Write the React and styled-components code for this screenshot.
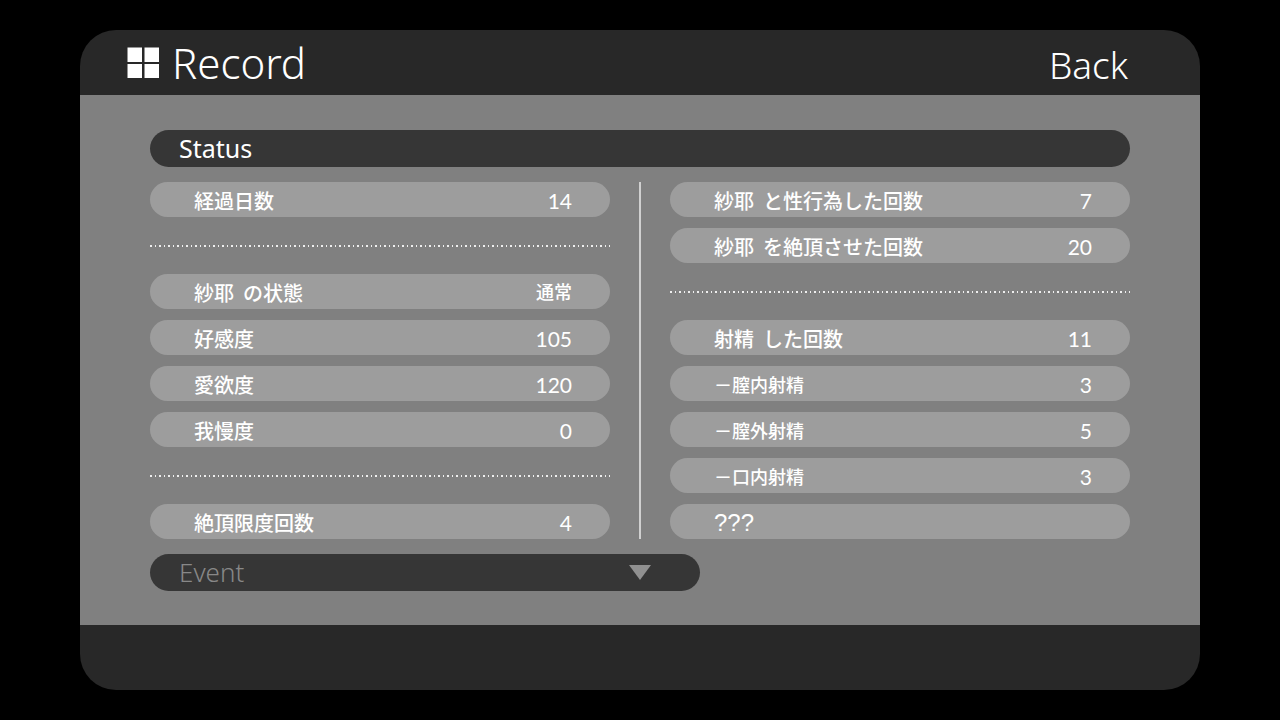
import React from 'react'
import styled, {createGlobalStyle} from 'styled-components'

const leftStats = [
    {label: '経過日数', value: '14'},
    null,
    {label: '紗耶  の状態', value: '通常', text: true},
    {label: '好感度', value: '105'},
    {label: '愛欲度', value: '120'},
    {label: '我慢度', value: '0'},
    null,
    {label: '絶頂限度回数', value: '4'},
]

const rightStats = [
    {label: '紗耶  と性行為した回数', value: '7'},
    {label: '紗耶  を絶頂させた回数', value: '20'},
    null,
    {label: '射精  した回数', value: '11'},
    {label: '－膣内射精', value: '3', sub: true},
    {label: '－膣外射精', value: '5', sub: true},
    {label: '－口内射精', value: '3', sub: true},
    {label: '???', value: '', locked: true},
]

function StatColumn({stats}) {
    return (
        <StatList>
            {stats.map((stat, i) => stat ? (
                <StatRow key={i}>
                    <StatLabel $sub={stat.sub} $locked={stat.locked}>{stat.label}</StatLabel>
                    <StatValue $text={stat.text}>{stat.value}</StatValue>
                </StatRow>
            ) : (
                <DottedRow key={i} role="presentation" />
            ))}
        </StatList>
    )
}

export default function App() {
    return (
        <>
            <GlobalStyle />
            <Panel>
                <Header>
                    <Title>
                        <MenuIcon viewBox="0 0 32 32" aria-hidden="true">
                            <path d="M0.5 0.5h14.5v14.5H0.5zM17.5 0.5h14.5v14.5H17.5zM0.5 17h14.5v14H0.5zM17.5 17h14.5v14H17.5z" />
                        </MenuIcon>
                        Record
                    </Title>
                    <BackButton type="button">Back</BackButton>
                </Header>
                <Body>
                    <SectionBar>Status</SectionBar>
                    <Columns>
                        <StatColumn stats={leftStats} />
                        <Divider />
                        <StatColumn stats={rightStats} />
                    </Columns>
                    <EventButton type="button" aria-expanded="false">
                        Event
                        <Arrow viewBox="0 0 22 15" aria-hidden="true">
                            <path d="M0 0h22L11 15z" />
                        </Arrow>
                    </EventButton>
                </Body>
                <Footer />
            </Panel>
        </>
    )
}

const GlobalStyle = createGlobalStyle`
* {
    box-sizing: border-box;
}

body {
    margin: 0;
    background: #000;
    color: #fff;
    font-family: Lato, "Noto Sans CJK JP", sans-serif;
}
`;

const Panel = styled.main`
margin: 30px 80px;
border-radius: 36px;
overflow: hidden;
background: #282828;
`;

const Header = styled.header`
display: flex;
align-items: center;
justify-content: space-between;
height: 65px;
padding: 0 72px 0 47px;
`;

const Title = styled.h1`
display: flex;
align-items: center;
gap: 13px;
margin: 0;
font: 300 42px/64px "Noto Sans", sans-serif;
`;

const MenuIcon = styled.svg`
width: 32px;
height: 32px;
fill: #fff;
`;

const BackButton = styled.button`
padding: 4px 0 0;
border: 0;
background: none;
color: #fff;
font: 300 37px/58px "Noto Sans", sans-serif;
cursor: pointer;
`;

const Body = styled.section`
display: flex;
flex-direction: column;
gap: 15px;
padding: 35px 70px 34px;
background: #808080;
`;

const SectionBar = styled.h2`
margin: 0;
padding: 0 29px;
border-radius: 19px;
background: #363636;
font: 400 25px/37px "Noto Sans", sans-serif;
`;

const Columns = styled.div`
display: grid;
grid-template-columns: 1fr 2px 1fr;
column-gap: 29px;
`;

const Divider = styled.div`
background: #d0d0d0;
`;

const StatList = styled.dl`
display: flex;
flex-direction: column;
gap: 11px;
margin: 0;
`;

const StatRow = styled.div`
display: flex;
align-items: center;
justify-content: space-between;
height: 35px;
padding: 2px 38px 0 44px;
border-radius: 18px;
background: #9d9d9d;
`;

const StatLabel = styled.dt`
font-family: ${props => props.$locked ? '"Liberation Sans"' : '"Noto Sans CJK JP"'}, sans-serif;
font-size: ${props => props.$locked ? 24 : props.$sub ? 18 : 20}px;
font-weight: ${props => props.$locked ? 400 : 500};
line-height: 33px;
white-space: pre;
`;

const StatValue = styled.dd`
margin: 0;
font-size: ${props => props.$text ? 18 : 21}px;
font-weight: ${props => props.$text ? 500 : 400};
line-height: 33px;
`;

const DottedRow = styled.div`
height: 35px;
background: repeating-linear-gradient(90deg, #eee 0 2px, transparent 2px 5px, #eee 5px 6px, transparent 6px 9px) center / 100% 2px no-repeat;
`;

const EventButton = styled.button`
display: flex;
align-items: center;
justify-content: space-between;
width: 550px;
max-width: 100%;
height: 37px;
padding: 0 49px 0 29px;
border: 0;
border-radius: 19px;
background: #363636;
color: #888;
font: 300 26px/37px "Noto Sans", sans-serif;
cursor: pointer;
`;

const Arrow = styled.svg`
width: 22px;
height: 15px;
fill: #909090;
`;

const Footer = styled.footer`
height: 65px;
`;
